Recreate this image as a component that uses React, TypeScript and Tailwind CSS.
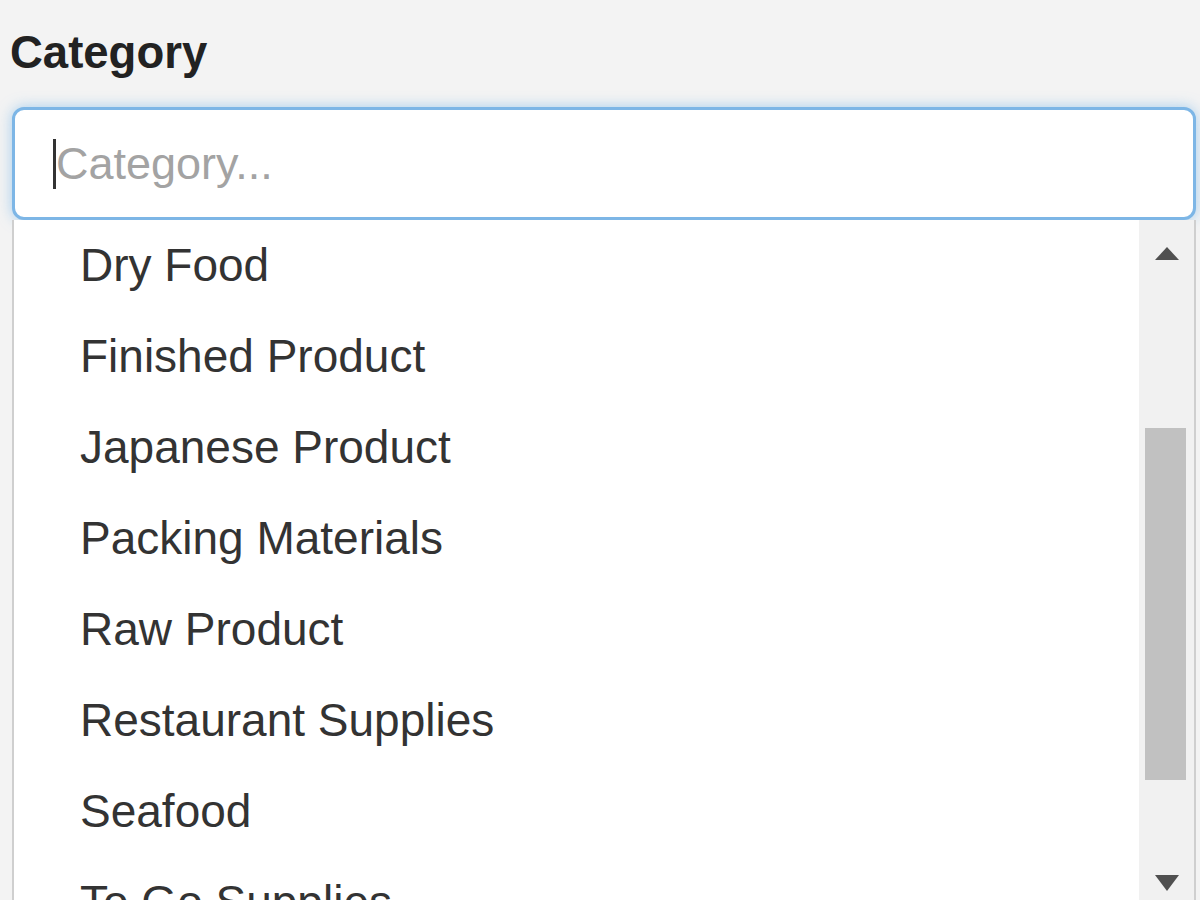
import React from 'react'

const CATEGORIES = [
  'Dry Food',
  'Finished Product',
  'Japanese Product',
  'Packing Materials',
  'Raw Product',
  'Restaurant Supplies',
  'Seafood',
  'To Go Supplies',
]

export default function App() {
  return (
    <div className="h-[900px] w-[1200px] overflow-hidden bg-[#f3f3f3] pl-[10px] pr-[4px] font-['Liberation_Sans',Arial,sans-serif]">
      <label className="block pt-[28px] text-[45.5px] font-bold leading-[50px] text-[#222]">Category</label>

      <div className="ml-[2px] mt-[29px] flex h-[113px] items-center rounded-[12px] border-[3px] border-[#7db6e6] bg-white pl-[38px] shadow-[0_0_14px_rgba(102,175,233,0.55)]">
        <span className="h-[50px] w-[3px] bg-[#333]" />
        <span className="text-[45px] text-[#a3a3a3]">Category...</span>
      </div>

      <div className="ml-[2px] flex h-[680px] border-x-2 border-[#cfcfcf] bg-white">
        <ul className="flex-1 pl-[66px]">
          {CATEGORIES.map((name) => (
            <li key={name} className="text-[46px] leading-[91px] text-[#333]">
              {name}
            </li>
          ))}
        </ul>

        <div className="flex w-[55px] flex-col bg-[#f1f1f1]">
          <div className="flex justify-center pt-[27px]">
            <svg width="24" height="13" viewBox="0 0 24 13">
              <polygon points="12,0 24,13 0,13" fill="#505050" />
            </svg>
          </div>
          <div className="ml-[6px] mr-[8px] mt-[168px] h-[352px] bg-[#c1c1c1]" />
          <div className="mt-[95px] flex justify-center">
            <svg width="24" height="16" viewBox="0 0 24 16">
              <polygon points="0,0 24,0 12,16" fill="#505050" />
            </svg>
          </div>
        </div>
      </div>
    </div>
  )
}
